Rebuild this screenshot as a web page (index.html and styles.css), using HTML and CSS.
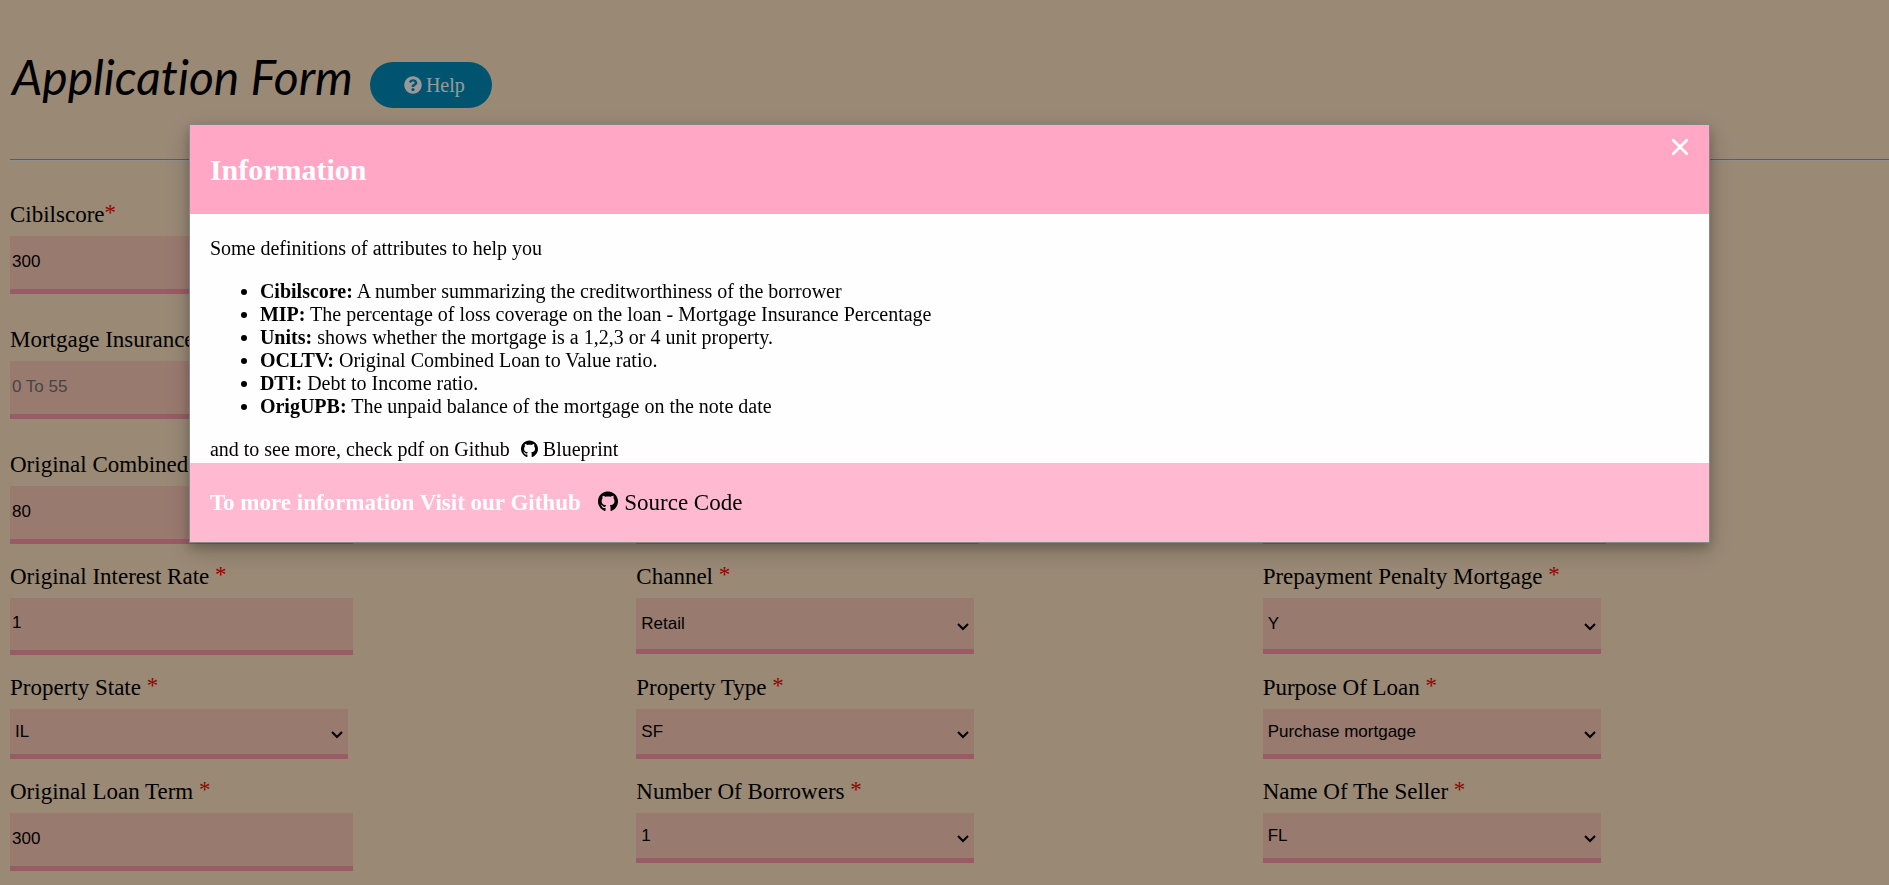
FILE: index.html
```html
<!DOCTYPE html>
<html lang="en">
<head>
<meta charset="utf-8">
<meta name="viewport" content="width=device-width, initial-scale=1">
<title>Application Form</title>
<link rel="stylesheet" href="styles.css">
</head>
<body>
<header class="page-header">
  <h1 class="page-title">Application Form</h1>
  <button class="help-button" type="button">
    <svg class="icon" viewBox="0 0 512 512" aria-hidden="true"><path fill="currentColor" d="M504 256c0 136.997-111.043 248-248 248S8 392.997 8 256C8 119.083 119.043 8 256 8s248 111.083 248 248zM262.655 90c-54.497 0-89.255 22.957-116.549 63.758-3.536 5.286-2.353 12.415 2.715 16.258l34.699 26.31c5.205 3.947 12.621 3.008 16.665-2.122 17.864-22.658 30.113-35.797 57.303-35.797 20.429 0 45.698 13.148 45.698 32.958 0 14.976-12.363 22.667-32.534 33.976C247.128 238.528 216 254.941 216 296v4c0 6.627 5.373 12 12 12h56c6.627 0 12-5.373 12-12v-1.333c0-28.462 83.186-29.647 83.186-106.667 0-58.002-60.165-102-116.531-102zM256 338c-25.365 0-46 20.635-46 46 0 25.364 20.635 46 46 46s46-20.636 46-46c0-25.365-20.635-46-46-46z"/></svg>
    Help
  </button>
</header>
<hr class="divider">
<form class="form">
  <div class="fields fields-wide">
    <div class="field"><label for="cibil">Cibilscore<span class="required">*</span></label><input id="cibil" class="control" type="text" value="300"></div>
    <div class="field"><input class="control" type="text" aria-label="First time home buyer"></div>
    <div class="field"><input class="control" type="text" aria-label="Metropolitan area"></div>
    <div class="field"><label for="mip">Mortgage Insurance</label><input id="mip" class="control" type="text" placeholder="0 To 55"></div>
    <div class="field"><input class="control" type="text" aria-label="Units"></div>
    <div class="field"><input class="control" type="text" aria-label="Occupancy"></div>
    <div class="field"><label for="ocltv">Original Combined</label><input id="ocltv" class="control" type="text" value="80"></div>
    <div class="field"><input class="control" type="text" aria-label="Debt to income"></div>
    <div class="field"><input class="control" type="text" aria-label="Original UPB"></div>
  </div>
  <div class="fields">
    <div class="field"><label for="rate">Original Interest Rate <span class="required">*</span></label><input id="rate" class="control control-rate" type="text" value="1"></div>
    <div class="field"><label for="channel">Channel <span class="required">*</span></label><div class="select-box"><select id="channel" class="control control-tall"><option>Retail</option></select><svg class="chevron" viewBox="0 0 12 8" aria-hidden="true"><path d="M1 1l5 5 5-5"/></svg></div></div>
    <div class="field"><label for="ppm">Prepayment Penalty Mortgage <span class="required">*</span></label><div class="select-box"><select id="ppm" class="control control-tall"><option>Y</option></select><svg class="chevron" viewBox="0 0 12 8" aria-hidden="true"><path d="M1 1l5 5 5-5"/></svg></div></div>
    <div class="field"><label for="state">Property State <span class="required">*</span></label><div class="select-box"><select id="state" class="control"><option>IL</option></select><svg class="chevron" viewBox="0 0 12 8" aria-hidden="true"><path d="M1 1l5 5 5-5"/></svg></div></div>
    <div class="field"><label for="type">Property Type <span class="required">*</span></label><div class="select-box"><select id="type" class="control"><option>SF</option></select><svg class="chevron" viewBox="0 0 12 8" aria-hidden="true"><path d="M1 1l5 5 5-5"/></svg></div></div>
    <div class="field"><label for="purpose">Purpose Of Loan <span class="required">*</span></label><div class="select-box"><select id="purpose" class="control"><option>Purchase mortgage</option></select><svg class="chevron" viewBox="0 0 12 8" aria-hidden="true"><path d="M1 1l5 5 5-5"/></svg></div></div>
    <div class="field"><label for="term">Original Loan Term <span class="required">*</span></label><input id="term" class="control" type="text" value="300"></div>
    <div class="field"><label for="borrowers">Number Of Borrowers <span class="required">*</span></label><div class="select-box"><select id="borrowers" class="control"><option>1</option></select><svg class="chevron" viewBox="0 0 12 8" aria-hidden="true"><path d="M1 1l5 5 5-5"/></svg></div></div>
    <div class="field"><label for="seller">Name Of The Seller <span class="required">*</span></label><div class="select-box"><select id="seller" class="control"><option>FL</option></select><svg class="chevron" viewBox="0 0 12 8" aria-hidden="true"><path d="M1 1l5 5 5-5"/></svg></div></div>
  </div>
</form>

<div class="overlay">
  <section class="modal" role="dialog" aria-modal="true" aria-labelledby="modal-title">
    <header class="modal-header">
      <h2 id="modal-title">Information</h2>
      <button class="close" type="button" aria-label="Close"><svg viewBox="0 0 16 16" aria-hidden="true"><path d="M2 2l12 12M14 2L2 14"/></svg></button>
    </header>
    <div class="modal-body">
      <p>Some definitions of attributes to help you</p>
      <ul>
        <li><b>Cibilscore:</b> A number summarizing the creditworthiness of the borrower</li>
        <li><b>MIP:</b> The percentage of loss coverage on the loan - Mortgage Insurance Percentage</li>
        <li><b>Units:</b> shows whether the mortgage is a 1,2,3 or 4 unit property.</li>
        <li><b>OCLTV:</b> Original Combined Loan to Value ratio.</li>
        <li><b>DTI:</b> Debt to Income ratio.</li>
        <li><b>OrigUPB:</b> The unpaid balance of the mortgage on the note date</li>
      </ul>
      <div>and to see more, check pdf on Github <a class="repo-link" href="#blueprint"><svg class="github" viewBox="0 0 496 512" aria-hidden="true"><path fill="currentColor" d="M244.800 8C106.100 8 0 113.300 0 252c0 110.900 69.800 205.800 169.500 239.200 12.800 2.300 17.300-5.600 17.300-12.100 0-6.200-.3-40.400-.3-61.400 0 0-70 15-84.700-29.800 0 0-11.400-29.100-27.800-36.600 0 0-22.900-15.700 1.600-15.400 0 0 24.900 2 38.600 25.800 21.900 38.600 58.600 27.500 72.900 20.900 2.300-16 8.800-27.100 16-33.700-55.900-6.200-112.300-14.300-112.300-110.500 0-27.500 7.600-41.300 23.600-58.900-2.600-6.500-11.100-33.300 2.600-67.900 20.900-6.500 69 27 69 27 20-5.600 41.500-8.500 62.800-8.500s42.800 2.900 62.800 8.500c0 0 48.100-33.600 69-27 13.700 34.700 5.200 61.400 2.600 67.900 16 17.700 25.800 31.500 25.800 58.900 0 96.500-58.900 104.200-114.800 110.500 9.200 7.900 17 22.900 17 46.400 0 33.700-.3 75.400-.3 83.600 0 6.500 4.600 14.400 17.300 12.100C428.200 457.800 496 362.900 496 252 496 113.300 383.500 8 244.800 8z"/></svg> Blueprint</a></div>
    </div>
    <footer class="modal-footer">
      <h3>To more information Visit our Github <a class="repo-link" href="#source"><svg class="github" viewBox="0 0 496 512" aria-hidden="true"><path fill="currentColor" d="M244.800 8C106.100 8 0 113.300 0 252c0 110.900 69.800 205.800 169.500 239.200 12.800 2.300 17.300-5.600 17.300-12.100 0-6.200-.3-40.400-.3-61.400 0 0-70 15-84.700-29.800 0 0-11.400-29.100-27.800-36.600 0 0-22.900-15.700 1.600-15.400 0 0 24.900 2 38.600 25.800 21.900 38.600 58.600 27.500 72.900 20.900 2.300-16 8.800-27.100 16-33.700-55.900-6.200-112.300-14.300-112.300-110.500 0-27.500 7.600-41.300 23.600-58.900-2.600-6.500-11.100-33.300 2.600-67.900 20.900-6.500 69 27 69 27 20-5.600 41.500-8.500 62.800-8.500s42.800 2.900 62.800 8.500c0 0 48.100-33.600 69-27 13.700 34.700 5.200 61.400 2.600 67.900 16 17.700 25.800 31.500 25.800 58.900 0 96.500-58.900 104.200-114.800 110.500 9.200 7.900 17 22.900 17 46.400 0 33.700-.3 75.400-.3 83.600 0 6.500 4.600 14.400 17.300 12.100C428.200 457.800 496 362.900 496 252 496 113.300 383.500 8 244.800 8z"/></svg> Source Code</a></h3>
    </footer>
  </section>
</div>
</body>
</html>
```

FILE: styles.css
```css
* {
  box-sizing: border-box;
}

body {
  margin: 0;
  padding-left: 10px;
  background: bisque;
  color: #000;
  font: 20px/23px "Liberation Serif", "Times New Roman", serif;
  overflow: hidden;
}

.page-header {
  display: flex;
  align-items: flex-start;
  gap: 17px;
  padding-top: 42px;
}

.page-title {
  margin: 0;
  padding-left: 2px;
  font: italic 400 48px/70px Lato, sans-serif;
  font-variant-ligatures: none;
}

.help-button {
  display: flex;
  align-items: center;
  gap: 4px;
  height: 46px;
  margin-top: 20px;
  padding: 0 27px 0 34px;
  border: 0;
  border-radius: 23px;
  background: #008cba;
  color: #fff;
  font: 20px/23px "Liberation Serif", "Times New Roman", serif;
}

.icon {
  width: 18px;
  height: 18px;
}

.divider {
  margin: 47px 0 0;
  border: 0;
  border-top: 1px solid #9a9a9a;
  border-bottom: 1px solid #eee;
}

.form {
  padding-top: 39px;
}

.fields {
  display: grid;
  grid-template-columns: repeat(3, 1fr);
  row-gap: 18px;
}

.fields-wide {
  row-gap: 31px;
  margin-bottom: 18px;
}

.field {
  display: flex;
  flex-direction: column;
  align-items: flex-start;
  gap: 6px;
}

.fields-wide .field {
  justify-content: flex-end;
}

.field label {
  font-size: 23px;
  line-height: 30px;
}

.required {
  color: #f00;
  line-height: 1;
  vertical-align: 2px;
}

.control {
  width: 343px;
  height: 58px;
  padding: 0 2px 2px;
  border: 0;
  border-bottom: 5px solid #ff99aa;
  border-radius: 0;
  background: #ffcbb9;
  color: #000;
  font: 17px/20px "Liberation Sans", Arial, sans-serif;
}

.control::placeholder {
  color: #757575;
}

.control-rate {
  height: 57px;
}

.select-box {
  position: relative;
}

select.control {
  display: block;
  appearance: none;
  width: 338px;
  height: 50px;
  padding: 0 5px;
}

select.control-tall {
  height: 56px;
}

.chevron {
  position: absolute;
  right: 5px;
  bottom: 20px;
  width: 12px;
  height: 8px;
  fill: none;
  stroke: #000;
  stroke-width: 2;
  pointer-events: none;
}

.control-tall + .chevron {
  bottom: 23px;
}

.overlay {
  position: fixed;
  inset: 0;
  padding: 124px 0 0 10%;
  background: rgba(0, 0, 0, 0.4);
}

.modal {
  width: 89.5%;
  border: 1px solid #888;
  background: #fefefe;
  box-shadow: 0 5px 10px rgba(0, 0, 0, 0.2), 0 8px 25px rgba(0, 0, 0, 0.19);
}

.modal-header {
  display: flex;
  justify-content: space-between;
  align-items: flex-start;
  padding: 3px 20px 2px;
  background: #ffa7c4;
  color: #fff;
}

.modal-header h2 {
  margin: 25px 0;
  font-size: 30px;
  line-height: 34px;
}

.close {
  display: flex;
  margin-top: 10px;
  padding: 0;
  border: 0;
  background: none;
  color: #fff;
}

.close svg {
  width: 18px;
  height: 18px;
  fill: none;
  stroke: currentColor;
  stroke-width: 2.4;
  stroke-linecap: round;
}

.modal-body {
  padding: 3px 20px 2px;
}

.modal-body p,
.modal-body ul {
  margin: 20px 0;
}

.modal-body ul {
  padding-left: 50px;
}

.modal-footer {
  padding: 3px 20px 2px;
  background: #ffbad2;
  color: #fff;
}

.modal-footer h3 {
  margin: 23px 0 24px;
  font-size: 23px;
  line-height: 27px;
}

.repo-link {
  margin-left: 6px;
  color: #000;
  font-weight: 400;
  text-decoration: none;
}

.modal-footer .repo-link {
  margin-left: 12px;
}

.github {
  width: 17px;
  height: 18px;
  vertical-align: -2px;
}

.modal-footer .github {
  width: 20px;
  height: 21px;
}
```
